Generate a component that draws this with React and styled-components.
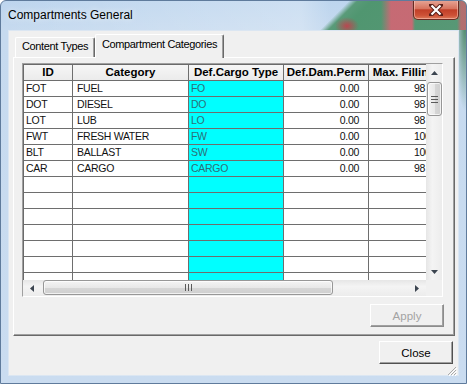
import React from 'react'
import styled, { createGlobalStyle } from 'styled-components'

const GlobalStyle = createGlobalStyle`
  html, body {
    margin: 0;
    padding: 0;
    background: #fff;
  }
  body {
    font-family: "Liberation Sans", Arial, sans-serif;
  }
  * {
    box-sizing: border-box;
  }
`

const Window = styled.div`
  position: relative;
  width: 467px;
  height: 384px;
  display: flex;
  flex-direction: column;
  padding-bottom: 7px;
  border: 1px solid #5f7b9c;
  border-radius: 6px 6px 0 0;
  overflow: hidden;
  background:
    radial-gradient(ellipse 10px 90px at 464px 20px, rgba(60, 125, 85, 0.9), rgba(60, 125, 85, 0)),
    linear-gradient(180deg, #bdd5ee 0px, #c6daef 30px, #cadcf0 100%);
`

// the desktop shows through the glass title bar on the right: a green diagonal with red patches
const TitleBar = styled.div`
  height: 29px;
  display: flex;
  align-items: flex-start;
  padding-left: 7px;
  background:
    radial-gradient(ellipse 12px 9px at 346px 25px, rgba(192, 66, 78, 0.95), rgba(192, 66, 78, 0)),
    linear-gradient(90deg, rgba(204, 104, 116, 0) 380px, rgba(204, 104, 116, 0.95) 390px, rgba(204, 104, 116, 0.95) 411px, rgba(204, 104, 116, 0) 414px),
    linear-gradient(90deg, rgba(200, 100, 110, 0) 456px, rgba(200, 100, 110, 0.8) 460px),
    linear-gradient(135deg, rgba(70, 140, 98, 0) 246px, rgba(78, 148, 108, 0.9) 252px, rgba(80, 150, 112, 1) 262px, rgba(88, 152, 118, 1) 100%),
    linear-gradient(90deg, rgba(255, 255, 255, 0) 0, rgba(255, 255, 255, 0.25) 300px, rgba(255, 255, 255, 0) 330px);
`

const Title = styled.div`
  margin-top: 7px;
  font-size: 12px;
  color: #000;
  text-shadow: 0 0 6px rgba(255, 255, 255, 0.9);
`

const CloseX = styled.div`
  margin: -1px 7px 0 auto;
  width: 46px;
  height: 20px;
  display: flex;
  align-items: center;
  justify-content: center;
  border: 1px solid #6a2a22;
  border-top: none;
  border-radius: 0 0 5px 5px;
  background: linear-gradient(180deg, #e7a899 0%, #d7745f 45%, #c13f28 52%, #cd5136 80%, #dc7a5a 100%);
  box-shadow: inset 0 0 0 1px rgba(255, 210, 200, 0.5);
`

const Client = styled.div`
  position: relative;
  flex: 1;
  margin: 0 7px;
  display: flex;
  flex-direction: column;
  padding: 3px 3px 0 4px;
  background: #f0f0f0;
  border: 1px solid #dbe6f2;
`

const TabStrip = styled.div`
  position: relative;
  z-index: 1;
  height: 24px;
  display: flex;
  align-items: flex-end;
  padding-left: 2px;
`

const Tab = styled.div`
  width: ${p => p.$width}px;
  height: ${p => (p.$active ? 24 : 20)}px;
  margin-bottom: ${p => (p.$active ? 0 : 1)}px;
  display: flex;
  justify-content: center;
  padding-top: ${p => (p.$active ? 3 : 2)}px;
  font-size: 11px;
  letter-spacing: -0.35px;
  color: #000;
  background: #f0f0f0;
  border-top: 1px solid #fff;
  border-left: 1px solid #fff;
  border-right: 1px solid #696969;
  border-radius: 2px 2px 0 0;
  box-shadow: inset -1px 0 0 #a0a0a0;
`

const Panel = styled.div`
  height: 279px;
  margin-top: -1px;
  display: flex;
  flex-direction: column;
  padding: 5px 10px 0 8px;
  border-top: 1px solid #fff;
  border-left: 1px solid #fff;
  border-right: 1px solid #696969;
  border-bottom: 1px solid #696969;
  box-shadow: inset -1px -1px 0 #a0a0a0;
`

const GridBox = styled.div`
  width: 421px;
  height: 234px;
  display: grid;
  grid-template-columns: 403px 16px;
  grid-template-rows: 216px 16px;
  border: 1px solid;
  border-color: #a0a0a0 #fff #fff #a0a0a0;
  background: #f0f0f0;
`

const GridBody = styled.div`
  overflow: hidden;
  background: #fff;
  border-top: 1px solid #6a6a6a;
  border-left: 1px solid #6a6a6a;
`

const Row = styled.div`
  display: flex;
  width: 416px;
  height: 16px;
  border-bottom: 1px solid #6e6e6e;
`

const Cell = styled.div`
  flex: none;
  width: ${p => p.$width}px;
  height: 100%;
  overflow: hidden;
  white-space: nowrap;
  border-right: 1px solid #6e6e6e;
  background: ${p => (p.$cyan ? '#00ffff' : '#fff')};
  color: ${p => (p.$cyan ? '#2d6f78' : '#111')};
  font-size: 10.5px;
  letter-spacing: -0.3px;
  line-height: 15px;
  text-align: ${p => p.$align};
  padding: ${p => p.$pad};
`

const HeadCell = styled.div`
  flex: none;
  width: ${p => p.$width}px;
  height: 100%;
  overflow: hidden;
  white-space: nowrap;
  border-right: 1px solid #6e6e6e;
  background: linear-gradient(180deg, #f6f6f6, #ebebeb);
  font-size: 11.5px;
  font-weight: bold;
  line-height: 15px;
  text-align: center;
  color: #000;
`

const VScroll = styled.div`
  display: flex;
  flex-direction: column;
  background: linear-gradient(90deg, #e6e6e6, #f4f4f4 40%, #ececec);
`

const HScroll = styled.div`
  display: flex;
  background: linear-gradient(180deg, #e6e6e6, #f4f4f4 40%, #ececec);
`

const ArrowBtn = styled.div`
  flex: none;
  width: ${p => (p.$horizontal ? 18 : 16)}px;
  height: ${p => (p.$horizontal ? 16 : 17)}px;
  display: flex;
  align-items: center;
  justify-content: center;
`

const Thumb = styled.div`
  flex: none;
  display: flex;
  align-items: center;
  justify-content: center;
  width: ${p => (p.$horizontal ? '290px' : '15px')};
  height: ${p => (p.$horizontal ? '15px' : '34px')};
  margin: ${p => (p.$horizontal ? '0 0 0 2px' : '1px 0 0 1px')};
  border: 1px solid #979797;
  border-radius: 3px;
  background: ${p =>
    p.$horizontal
      ? 'linear-gradient(180deg, #f4f4f4, #e8e8e8 50%, #d6d6d6 52%, #cfcfcf)'
      : 'linear-gradient(90deg, #f4f4f4, #e8e8e8 50%, #d6d6d6 52%, #cfcfcf)'};
  box-shadow: inset 0 0 0 1px rgba(255, 255, 255, 0.7);
`

const Spacer = styled.div`
  flex: 1;
`

const Corner = styled.div`
  background: #f0f0f0;
`

const ButtonRow = styled.div`
  display: flex;
  justify-content: flex-end;
  margin-top: ${p => p.$top}px;
  padding-right: ${p => p.$right || 0}px;
`

const Button = styled.button`
  width: 74px;
  height: 23px;
  padding: 0;
  font-family: "Liberation Sans", Arial, sans-serif;
  font-size: 11.5px;
  color: ${p => (p.disabled ? '#a3a3a3' : '#000')};
  background: #f0f0f0;
  border-top: 1px solid #fff;
  border-left: 1px solid #fff;
  border-right: 1px solid ${p => (p.disabled ? '#8c8c8c' : '#505050')};
  border-bottom: 1px solid ${p => (p.disabled ? '#8c8c8c' : '#505050')};
  box-shadow: inset -1px -1px 0 #a0a0a0;
`

const Grip = styled.div`
  position: absolute;
  right: 1px;
  bottom: 1px;
  width: 12px;
  height: 12px;
`

const columns = [
  { key: 'id', title: 'ID', width: 49, align: 'left', pad: '0 0 0 2px' },
  { key: 'category', title: 'Category', width: 116, align: 'left', pad: '0 0 0 4px' },
  { key: 'cargo', title: 'Def.Cargo Type', width: 95, align: 'left', pad: '0 0 0 2px', cyan: true },
  { key: 'perm', title: 'Def.Dam.Perm', width: 85, align: 'right', pad: '0 9px 0 0' },
  { key: 'fill', title: 'Max. Filling', width: 71, align: 'left', pad: '0 0 0 45px' },
]

const rows = [
  { id: 'FOT', category: 'FUEL', cargo: 'FO', perm: '0.00', fill: '98' },
  { id: 'DOT', category: 'DIESEL', cargo: 'DO', perm: '0.00', fill: '98' },
  { id: 'LOT', category: 'LUB', cargo: 'LO', perm: '0.00', fill: '98' },
  { id: 'FWT', category: 'FRESH WATER', cargo: 'FW', perm: '0.00', fill: '100' },
  { id: 'BLT', category: 'BALLAST', cargo: 'SW', perm: '0.00', fill: '100' },
  { id: 'CAR', category: 'CARGO', cargo: 'CARGO', perm: '0.00', fill: '98' },
]

const emptyRows = 7

const Arrow = ({ dir }) => {
  const points = {
    up: '0,4 3.5,0 7,4',
    down: '0,0 7,0 3.5,4',
    left: '4,0 4,7 0,3.5',
    right: '0,0 4,3.5 0,7',
  }[dir]
  const horizontal = dir === 'left' || dir === 'right'
  return (
    <svg width={horizontal ? 4 : 7} height={horizontal ? 7 : 4} viewBox={horizontal ? '0 0 4 7' : '0 0 7 4'}>
      <polygon points={points} fill="#3c4550" />
    </svg>
  )
}

const GripLines = ({ horizontal }) => (
  <svg width={7} height={7} viewBox="0 0 7 7">
    {[0, 3, 6].map(o =>
      horizontal ? (
        <rect key={o} x={o} y={0} width={1} height={7} fill="#5a5a5a" />
      ) : (
        <rect key={o} x={0} y={o} width={7} height={1} fill="#5a5a5a" />
      )
    )}
  </svg>
)

function App() {
  return (
    <>
      <GlobalStyle />
      <Window>
        <TitleBar>
          <Title>Compartments General</Title>
          <CloseX>
            <svg width="14" height="12" viewBox="0 0 14 12">
              <path d="M2 1 L12 11 M12 1 L2 11" stroke="#5a1f18" strokeWidth="4.2" strokeLinecap="square" />
              <path d="M2.5 1.5 L11.5 10.5 M11.5 1.5 L2.5 10.5" stroke="#fff" strokeWidth="2.2" />
            </svg>
          </CloseX>
        </TitleBar>

        <Client>
          <TabStrip>
            <Tab $width={80}>Content Types</Tab>
            <Tab $width={129} $active>Compartment Categories</Tab>
          </TabStrip>

          <Panel>
            <GridBox>
              <GridBody>
                <Row>
                  {columns.map(c => (
                    <HeadCell key={c.key} $width={c.width}>
                      {c.title}
                    </HeadCell>
                  ))}
                </Row>
                {rows.map(r => (
                  <Row key={r.id}>
                    {columns.map(c => (
                      <Cell key={c.key} $width={c.width} $align={c.align} $pad={c.pad} $cyan={c.cyan}>
                        {r[c.key]}
                      </Cell>
                    ))}
                  </Row>
                ))}
                {Array.from({ length: emptyRows }).map((_, i) => (
                  <Row key={'e' + i}>
                    {columns.map(c => (
                      <Cell key={c.key} $width={c.width} $cyan={c.cyan} />
                    ))}
                  </Row>
                ))}
              </GridBody>

              <VScroll>
                <ArrowBtn>
                  <Arrow dir="up" />
                </ArrowBtn>
                <Thumb>
                  <GripLines />
                </Thumb>
                <Spacer />
                <ArrowBtn>
                  <Arrow dir="down" />
                </ArrowBtn>
              </VScroll>

              <HScroll>
                <ArrowBtn $horizontal>
                  <Arrow dir="left" />
                </ArrowBtn>
                <Thumb $horizontal>
                  <GripLines horizontal />
                </Thumb>
                <Spacer />
                <ArrowBtn $horizontal>
                  <Arrow dir="right" />
                </ArrowBtn>
              </HScroll>

              <Corner />
            </GridBox>

            <ButtonRow $top={7}>
              <Button disabled>Apply</Button>
            </ButtonRow>
          </Panel>

          <ButtonRow $top={5} $right={2}>
            <Button>Close</Button>
          </ButtonRow>

          <Grip>
            <svg width="12" height="12" viewBox="0 0 12 12">
              <path d="M11 3 L3 11 M11 6 L6 11 M11 9 L9 11" stroke="#a9a9a9" strokeWidth="1" />
              <path d="M12 4 L4 12 M12 7 L7 12 M12 10 L10 12" stroke="#fff" strokeWidth="1" />
            </svg>
          </Grip>
        </Client>
      </Window>
    </>
  )
}

export default App
